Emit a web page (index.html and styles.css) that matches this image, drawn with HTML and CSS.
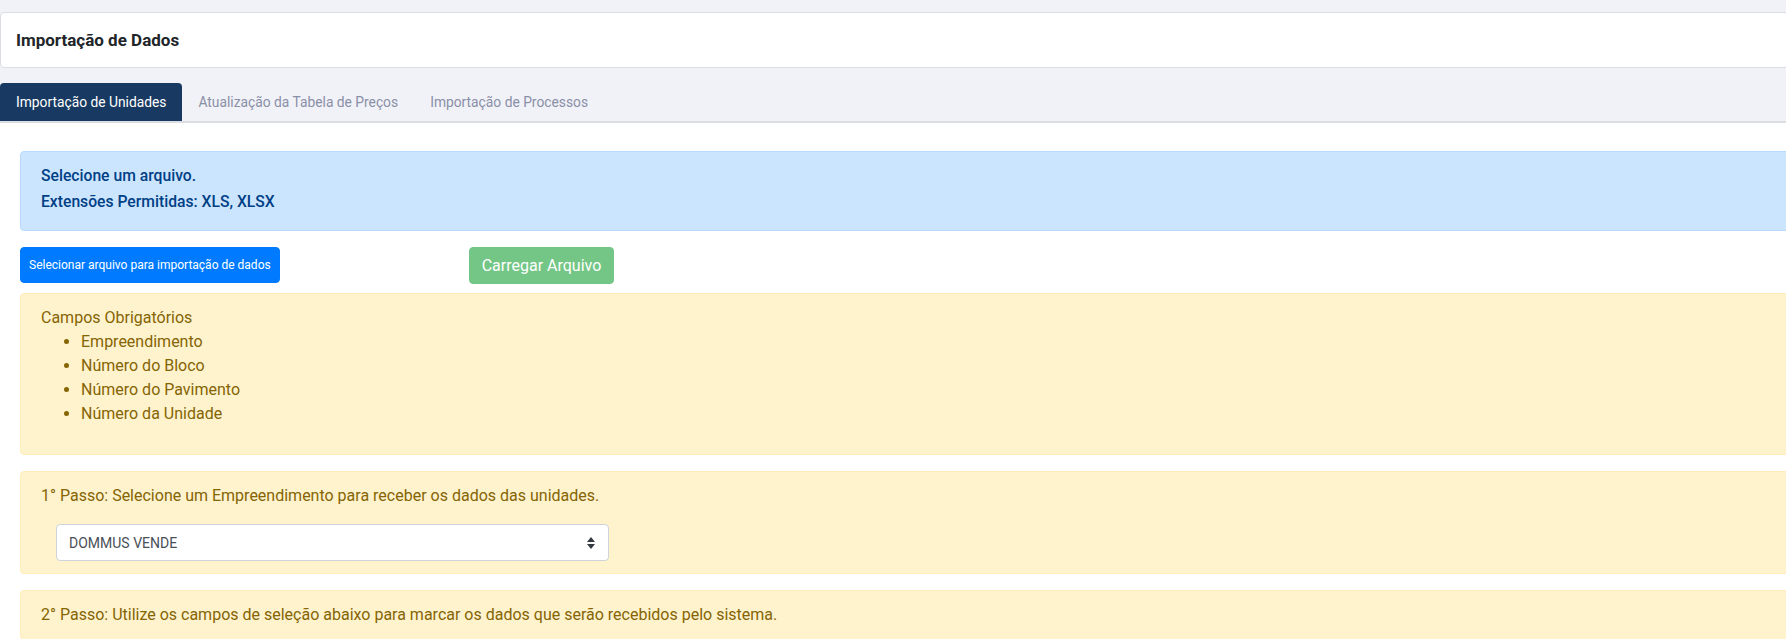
FILE: index.html
```html
<!DOCTYPE html>
<html lang="pt-BR">
<head>
<meta charset="utf-8">
<title>Importação de Dados</title>
<link rel="stylesheet" href="styles.css">
</head>
<body>
<div class="page">
  <header class="title-card">
    <h1 class="title">Importação de Dados</h1>
  </header>
  <nav class="tabs">
    <a class="tab active">Importação de Unidades</a>
    <a class="tab">Atualização da Tabela de Preços</a>
    <a class="tab">Importação de Processos</a>
  </nav>
  <main class="tab-content">
    <div class="alert alert-info">
      <p class="info-line">Selecione um arquivo.</p>
      <p class="info-line">Extensões Permitidas: XLS, XLSX</p>
    </div>
    <div class="actions">
      <button class="btn btn-blue" type="button">Selecionar arquivo para importação de dados</button>
      <button class="btn btn-green" type="button" disabled>Carregar Arquivo</button>
    </div>
    <div class="alert alert-warn">
      <div class="req-title">Campos Obrigatórios</div>
      <ul class="req-list">
        <li>Empreendimento</li>
        <li>Número do Bloco</li>
        <li>Número do Pavimento</li>
        <li>Número da Unidade</li>
      </ul>
    </div>
    <div class="alert alert-warn">
      <p class="step-text">1° Passo: Selecione um Empreendimento para receber os dados das unidades.</p>
      <div class="select-row">
        <div class="select">
          <span class="select-value">DOMMUS VENDE</span>
          <svg class="select-arrows" width="8" height="12" viewBox="0 0 8 12"><path d="M4 0 L8 5 L0 5 Z M4 12 L8 7 L0 7 Z" fill="#343a40"/></svg>
        </div>
      </div>
    </div>
    <div class="alert alert-warn">
      <p class="step-text">2° Passo: Utilize os campos de seleção abaixo para marcar os dados que serão recebidos pelo sistema.</p>
    </div>
  </main>
</div>
</body>
</html>
```

FILE: styles.css
```css
html, body {
  margin: 0;
  padding: 0;
  overflow: hidden;
}
body {
  background: #f1f2f7;
  font-family: Roboto, "Liberation Sans", sans-serif;
  color: #212529;
}
.page {
  width: calc(100% + 40px);
  padding-top: 12px;
}
.title-card {
  box-sizing: border-box;
  height: 56px;
  background: #fff;
  border: 1px solid #dcdde3;
  border-radius: 4px;
  padding: 0 15px;
  display: flex;
  align-items: center;
}
.title {
  margin: 0;
  font-size: 17px;
  font-weight: 700;
  line-height: 24px;
  color: #212529;
}
.tabs {
  display: flex;
  padding-top: 15px;
  border-bottom: 2px solid #dcdde2;
}
.tab {
  padding: 9px 16px;
  font-size: 13.8px;
  line-height: 20px;
  color: #8a8fa8;
  border-radius: 4px 4px 0 0;
  text-decoration: none;
}
.tab.active {
  background: #183a62;
  color: #fff;
}
.tab-content {
  background: #fff;
  padding: 28px 0 60px 20px;
}
.alert {
  border: 1px solid transparent;
  border-radius: 4px;
  padding: 12px 20px;
  font-size: 16px;
  line-height: 24px;
}
.alert-info {
  background: #cce5ff;
  border-color: #b8daff;
  color: #004085;
  padding-bottom: 16px;
}
.info-line {
  margin: 0;
  font-size: 15.7px;
  font-weight: 500;
}
.info-line + .info-line {
  margin-top: 2px;
}
.actions {
  display: flex;
  align-items: flex-start;
  margin: 16px 0 9px;
}
.btn {
  border: 1px solid transparent;
  border-radius: 4px;
  color: #fff;
  font-family: Roboto, "Liberation Sans", sans-serif;
  cursor: pointer;
}
.btn-blue {
  height: 36px;
  padding: 0 8px;
  font-size: 12px;
  background: #007bff;
  border-color: #007bff;
}
.btn-green {
  height: 37px;
  margin-left: 189px;
  padding: 0 12px;
  font-size: 16px;
  background: #73c686;
  border-color: #73c686;
  color: #fff;
}
.alert-warn {
  background: #fff3cd;
  border-color: #ffeeba;
  color: #856404;
  margin-bottom: 16px;
}
.req-list {
  margin: 0 0 16px;
  padding-left: 40px;
}
.step-text {
  margin: 0;
}
.select-row {
  margin-top: 16px;
  padding-left: 15px;
}
.select {
  box-sizing: border-box;
  width: 553px;
  height: 37px;
  border: 1px solid #ced4da;
  border-radius: 4px;
  background: #fff;
  display: flex;
  align-items: center;
  justify-content: space-between;
  padding: 0 13px 0 12px;
}
.select-value {
  font-size: 14px;
  color: #495057;
}
.select-arrows {
  display: block;
}
```
